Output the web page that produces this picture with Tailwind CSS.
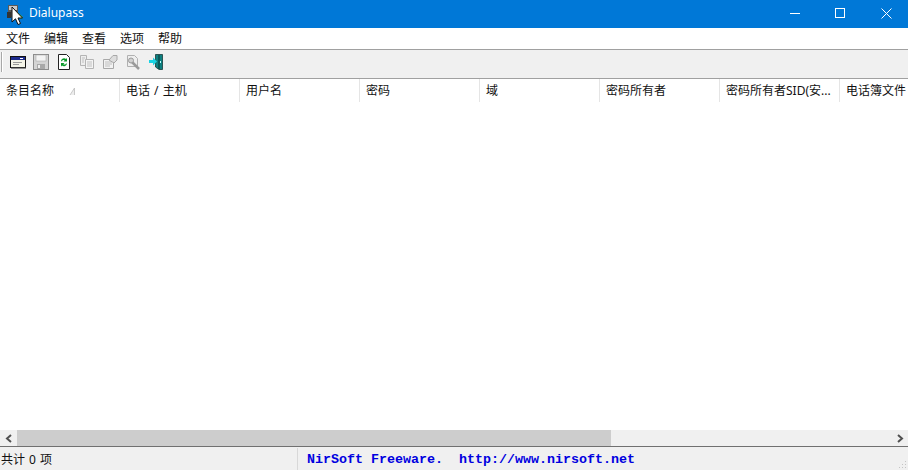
<!DOCTYPE html>
<html lang="zh">
<head>
  <meta charset="UTF-8" />
  <title>Dialupass</title>
  <script src="https://cdn.jsdelivr.net/npm/@tailwindcss/browser@4"></script>
</head>
<body class="bg-white overflow-hidden">
<div class="w-[908px] h-[470px] overflow-hidden flex flex-col font-['Noto_Sans','Noto_Sans_CJK_SC',sans-serif] text-[12px] text-[#111] [word-spacing:1px]">

  <!-- Title bar -->
  <div class="h-[28px] bg-[#0078d7] flex items-center text-white shrink-0">
    <div class="relative w-[28px] h-[28px] shrink-0">
      <svg class="absolute left-[6px] top-[3px]" width="20" height="23" viewBox="0 0 20 23">
        <rect x="2" y="2" width="10" height="12" fill="#5a5a5a"/>
        <rect x="3" y="3" width="8" height="4" fill="#c8c8c8"/>
        <rect x="1" y="9" width="4" height="6" fill="#333"/>
        <path d="M11 9l6 5-2 2-4-3z" fill="#43b02a"/>
        <path d="M6 4v15l3.500-3.200 2.500 5.700 2.500-1-2.500-5.500h4.500z" fill="#fff" stroke="#111" stroke-width="1"/>
      </svg>
    </div>
    <span class="ml-[1px] pb-[2px]">Dialupass</span>
    <div class="ml-auto mr-[-1px] flex h-full pb-[2px]">
      <div class="w-[46px] pl-[2px] flex items-center justify-center"><div class="w-[10px] h-px bg-white"></div></div>
      <div class="w-[46px] flex items-center justify-center"><div class="w-[10px] h-[10px] border border-white"></div></div>
      <div class="w-[46px] flex items-center justify-center">
        <svg width="11" height="11" viewBox="0 0 11 11"><path d="M.5.500l10 10M10.500.500l-10 10" stroke="#fff" fill="none"/></svg>
      </div>
    </div>
  </div>

  <!-- Menu -->
  <div class="h-[20px] pt-[1px] bg-white flex items-center shrink-0 border-b border-[#a0a0a0] box-content">
    <span class="ml-[6px]">文件</span>
    <span class="ml-[14px]">编辑</span>
    <span class="ml-[14px]">查看</span>
    <span class="ml-[14px]">选项</span>
    <span class="ml-[14px]">帮助</span>
  </div>

  <!-- Toolbar -->
  <div class="h-[29px] pb-[4px] bg-[#f0f0f0] flex items-center shrink-0 border-b border-[#a0a0a0] box-border">
    <div class="w-[2px] h-[20px] ml-px bg-[#a8a8a8] border-r border-white"></div>
    <div class="ml-[7px] flex items-center gap-[7px]">
      <svg width="16" height="16" viewBox="0 0 16 16"><rect x=".5" y="2.500" width="15" height="11" fill="#f4f4e8" stroke="#111"/><rect x="1" y="3" width="14" height="3" fill="#1c2a8c"/><rect x="10" y="4" width="3" height="1" fill="#fff"/><rect x="3" y="8" width="9" height="1" fill="#999"/><rect x="3" y="10" width="6" height="1" fill="#999"/><rect x="1" y="13" width="15" height="1.500" fill="#333"/></svg>
      <svg width="16" height="16" viewBox="0 0 16 16"><rect x=".5" y=".5" width="15" height="15" fill="#d4d4d4" stroke="#8c8c8c"/><rect x="3" y="1" width="10" height="6" fill="#f4f4f4" stroke="#a0a0a0" stroke-width=".5"/><rect x="4" y="10" width="8" height="5" fill="#a8a8a8"/><rect x="5" y="11" width="2" height="3" fill="#eee"/></svg>
      <svg width="16" height="16" viewBox="0 0 16 16"><path d="M2.500.500h8l3 3v12h-11z" fill="#fff" stroke="#222"/><path d="M5 7a3 3 0 0 1 5-2l1-1v3.500H7.500l1.200-1.200A1.700 1.700 0 0 0 6 7.500z" fill="#0a9a2a"/><path d="M11 9.500a3 3 0 0 1-5 2l-1 1V9h3.500l-1.200 1.200A1.700 1.700 0 0 0 10 9.500z" fill="#0a9a2a"/></svg>
      <svg width="16" height="16" viewBox="0 0 16 16"><path d="M1.500 1.500h6v10h-6z" fill="#eee" stroke="#b4b4b4"/><path d="M6.500 5.500h8v9h-8z" fill="#f4f4f4" stroke="#b4b4b4"/><path d="M8 8h5M8 10h5M8 12h5M3 4h3M3 6h2M3 8h2" stroke="#c0c0c0"/></svg>
      <svg width="16" height="16" viewBox="0 0 16 16"><path d="M1.500 5.500h10v9h-10z" fill="#f2f2f2" stroke="#a8a8a8"/><path d="M3 8h7M3 10h7M3 12h5" stroke="#c0c0c0"/><path d="M7 6l4-4.500h4v4.500l-3 3z" fill="#ddd" stroke="#a8a8a8"/></svg>
      <svg width="16" height="16" viewBox="0 0 16 16"><path d="M2.500 1.500h7l3 3v8h-10z" fill="#eee" stroke="#b0b0b0"/><path d="M6 7l8 8" stroke="#9a9a9a" stroke-width="2.500"/><circle cx="6" cy="6.500" r="2.500" fill="#d0d0d0" stroke="#9a9a9a"/></svg>
      <svg width="16" height="16" viewBox="0 0 16 16"><path d="M7.500 .5h7v15l-3.500 0-3.500-2.500z" fill="#0e8080" stroke="#0a2a2a" stroke-width=".7"/><path d="M11 1v14" stroke="#063434"/><rect x="12" y="7" width="1" height="2" fill="#bff"/><path d="M1 6h4V3.500L9 7.500l-4 4V9H1z" fill="#18d4e4"/></svg>
    </div>
  </div>

  <!-- Column headers -->
  <div class="h-[23px] flex shrink-0 overflow-hidden bg-white">
    <div class="relative w-[120px] shrink-0 border-r border-[#e5e5e5] pl-[6px] pt-[3px]">条目名称
      <svg class="absolute left-[69px] top-[8px]" width="8" height="9" viewBox="0 0 8 9"><path d="M1 8L5.500 1V8z" fill="#ededed"/><path d="M1 8L5.500 1V8" fill="none" stroke="#bcbcbc" stroke-width=".8"/></svg>
    </div>
    <div class="w-[120px] shrink-0 border-r border-[#e5e5e5] pl-[6px] pt-[3px]">电话 / 主机</div>
    <div class="w-[120px] shrink-0 border-r border-[#e5e5e5] pl-[6px] pt-[3px]">用户名</div>
    <div class="w-[120px] shrink-0 border-r border-[#e5e5e5] pl-[6px] pt-[3px]">密码</div>
    <div class="w-[120px] shrink-0 border-r border-[#e5e5e5] pl-[6px] pt-[3px]">域</div>
    <div class="w-[120px] shrink-0 border-r border-[#e5e5e5] pl-[6px] pt-[3px]">密码所有者</div>
    <div class="w-[120px] shrink-0 border-r border-[#e5e5e5] pl-[6px] pt-[3px] whitespace-nowrap">密码所有者SID(安...</div>
    <div class="w-[68px] shrink-0 pl-[6px] pt-[3px] whitespace-nowrap">电话簿文件</div>
  </div>

  <!-- List body -->
  <div class="flex-1 bg-white"></div>

  <!-- Horizontal scrollbar -->
  <div class="h-[16px] bg-[#f0f0f0] flex shrink-0 items-center">
    <div class="w-[17px] flex justify-center">
      <svg width="8" height="9" viewBox="0 0 8 9"><path d="M6 1L2 4.500 6 8" fill="none" stroke="#505050" stroke-width="2"/></svg>
    </div>
    <div class="w-[594px] h-full bg-[#cdcdcd]"></div>
    <div class="ml-auto w-[17px] flex justify-center">
      <svg width="8" height="9" viewBox="0 0 8 9"><path d="M2 1l4 3.500L2 8" fill="none" stroke="#505050" stroke-width="2"/></svg>
    </div>
  </div>

  <!-- Status bar -->
  <div class="h-[24px] bg-[#f0f0f0] flex shrink-0 relative border-t border-[#707070]">
    <div class="w-[298px] border-r border-[#d8d8d8] mt-px pl-[1px] pt-[3px]">共计 0 项</div>
    <div class="pl-[9px] pt-[4px] text-[#0000e0] font-bold font-['Liberation_Mono','DejaVu_Sans_Mono',monospace] text-[13.33px] leading-[18px] [word-spacing:0] whitespace-pre">NirSoft Freeware.  http://www.nirsoft.net</div>
    <svg class="absolute right-[1px] bottom-[1px]" width="8" height="8" viewBox="0 0 8 8" fill="#c4c4c4"><rect x="6" y="0" width="1" height="1"/><rect x="3" y="3" width="1" height="1"/><rect x="6" y="3" width="1" height="1"/><rect x="0" y="6" width="1" height="1"/><rect x="3" y="6" width="1" height="1"/><rect x="6" y="6" width="1" height="1"/></svg>
  </div>
</div>
</body>
</html>
